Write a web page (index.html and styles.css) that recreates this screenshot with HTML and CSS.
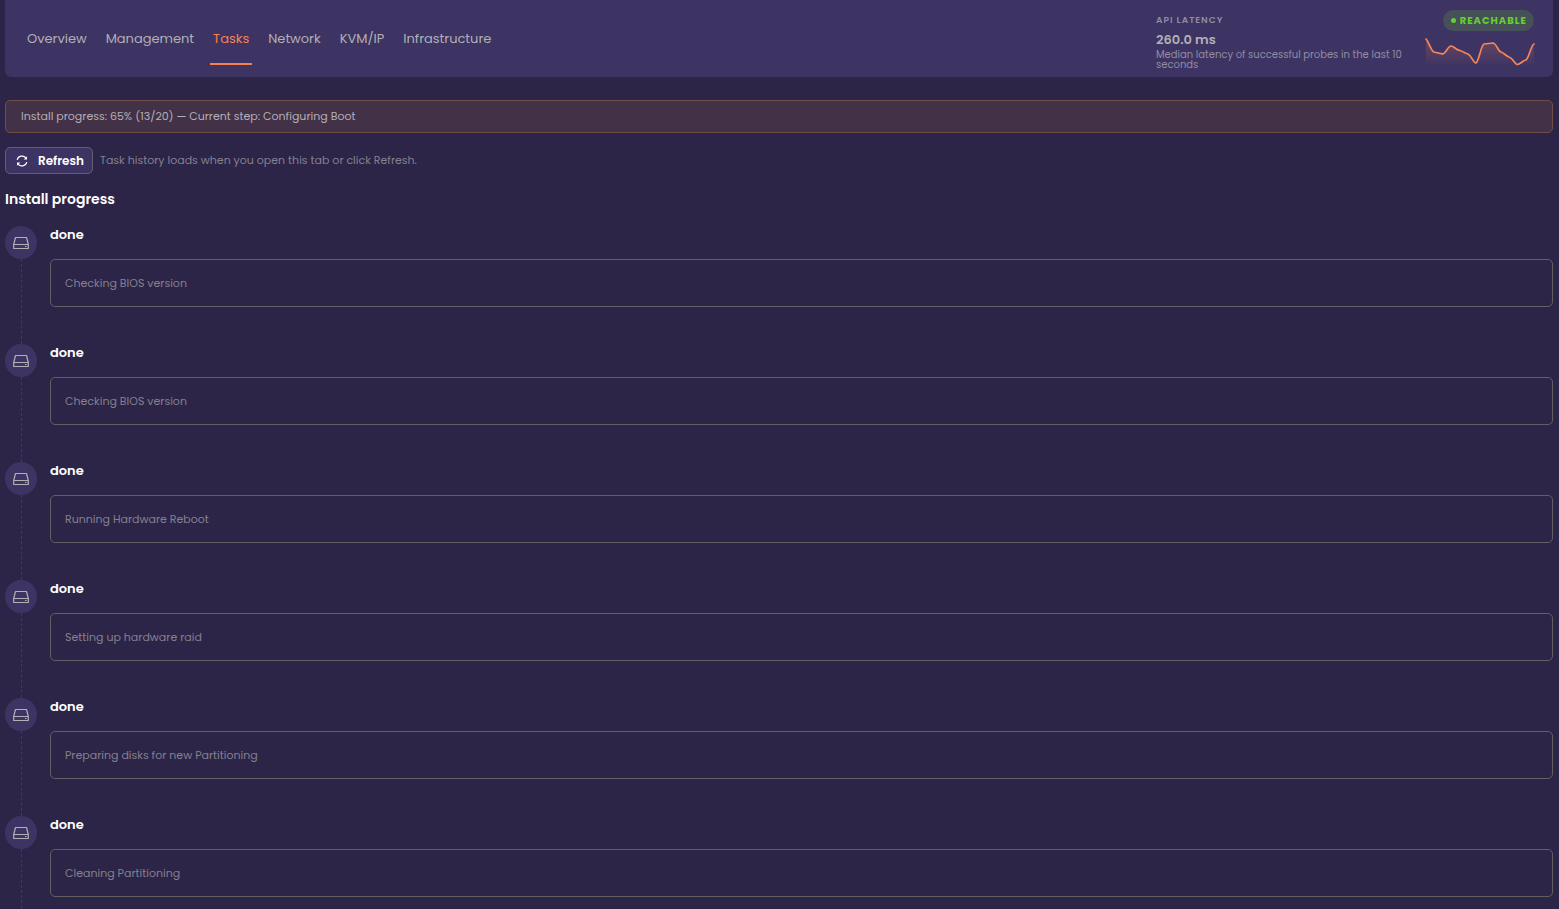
FILE: index.html
```html
<!DOCTYPE html>
<html lang="en">
<head>
<meta charset="utf-8">
<title>Server tasks</title>
<link rel="stylesheet" href="styles.css">
</head>
<body>
<svg class="defs" aria-hidden="true">
  <symbol id="drive" viewBox="0 0 16 14">
    <path d="M2.500 1.500h11l1.800 7v4H.7v-4zM.7 8.500h14.600M12 10.500h1.500" fill="none" stroke="currentColor" stroke-width="1.200" stroke-linejoin="round"/>
  </symbol>
</svg>
<header class="topbar">
  <nav class="tabs">
    <a class="tab" href="#overview">Overview</a>
    <a class="tab" href="#management">Management</a>
    <a class="tab tab-active" href="#tasks" aria-current="page">Tasks</a>
    <a class="tab" href="#network">Network</a>
    <a class="tab" href="#kvm">KVM/IP</a>
    <a class="tab" href="#infrastructure">Infrastructure</a>
  </nav>
  <section class="latency">
    <div class="latency-text">
      <div class="latency-label">API LATENCY</div>
      <div class="latency-value">260.0 ms</div>
      <div class="latency-note">Median latency of successful probes in the last 10 seconds</div>
    </div>
    <div class="latency-side">
      <span class="badge"><span class="dot"></span>REACHABLE</span>
      <svg class="spark" viewBox="0 0 108 28" aria-hidden="true">
        <defs>
          <linearGradient id="fade" x1="0" y1="0" x2="0" y2="1">
            <stop offset="0" stop-color="#f9814f" stop-opacity=".25"/>
            <stop offset="1" stop-color="#f9814f" stop-opacity="0"/>
          </linearGradient>
        </defs>
        <path fill="url(#fade)" d="M0 1C3 4 5 13 8 14L17 16C20 15 22 8 25 8C28 8 30 12 34 12.500C38 14 39 15 42 16C46 18 47 25 50 25C53 23 55 7 58 6L67 5C70 5 72 13 75 14C78 15 80 18 83 19C87 20 88 25 91 26.500C94 27 97 22 100 22C103 20 105 7 108 6V28H0z"/>
        <path fill="none" stroke="#f5855a" stroke-width="1.700" stroke-linecap="round" d="M0 1C3 4 5 13 8 14L17 16C20 15 22 8 25 8C28 8 30 12 34 12.500C38 14 39 15 42 16C46 18 47 25 50 25C53 23 55 7 58 6L67 5C70 5 72 13 75 14C78 15 80 18 83 19C87 20 88 25 91 26.500C94 27 97 22 100 22C103 20 105 7 108 6"/>
      </svg>
    </div>
  </section>
</header>
<main>
  <div class="notice" role="status">Install progress: 65% (13/20) — Current step: Configuring Boot</div>
  <div class="toolbar">
    <button class="refresh" type="button">
      <svg class="refresh-icon" viewBox="0 0 12 12" aria-hidden="true">
        <path d="M1.200 4.800A5 5 0 0 1 10 3M10.800 7.200A5 5 0 0 1 2 9" fill="none" stroke="currentColor" stroke-width="1.200"/>
        <path d="M11 1.200V4.500H7.700zM1 10.800V7.500H4.300z" fill="currentColor"/>
      </svg>
      Refresh
    </button>
    <span class="hint">Task history loads when you open this tab or click Refresh.</span>
  </div>
  <h2 class="title">Install progress</h2>
  <ol class="timeline">
    <li class="step"><div class="rail"><span class="node"><svg class="drive"><use href="#drive"/></svg></span></div><div class="body"><h3 class="state">done</h3><p class="card">Checking BIOS version</p></div></li>
    <li class="step"><div class="rail"><span class="node"><svg class="drive"><use href="#drive"/></svg></span></div><div class="body"><h3 class="state">done</h3><p class="card">Checking BIOS version</p></div></li>
    <li class="step"><div class="rail"><span class="node"><svg class="drive"><use href="#drive"/></svg></span></div><div class="body"><h3 class="state">done</h3><p class="card">Running Hardware Reboot</p></div></li>
    <li class="step"><div class="rail"><span class="node"><svg class="drive"><use href="#drive"/></svg></span></div><div class="body"><h3 class="state">done</h3><p class="card">Setting up hardware raid</p></div></li>
    <li class="step"><div class="rail"><span class="node"><svg class="drive"><use href="#drive"/></svg></span></div><div class="body"><h3 class="state">done</h3><p class="card">Preparing disks for new Partitioning</p></div></li>
    <li class="step"><div class="rail"><span class="node"><svg class="drive"><use href="#drive"/></svg></span></div><div class="body"><h3 class="state">done</h3><p class="card">Cleaning Partitioning</p></div></li>
  </ol>
</main>
</body>
</html>
```
FILE: styles.css
```css
* { box-sizing: border-box; }
body {
  margin: 0;
  padding: 0 6px 0 5px;
  background: #2c2548;
  color: #b2afb6;
  font-family: Poppins, Inter, "Open Sans", sans-serif;
  font-size: 11px;
  line-height: 16px;
}
h2, h3, p, ol { margin: 0; padding: 0; }
.defs { display: none; }
.topbar {
  display: flex;
  justify-content: space-between;
  align-items: flex-start;
  padding: 10px 19px 7px;
  background: #3d3464;
  border-radius: 0 0 6px 6px;
}
.tabs { display: flex; gap: 13px; padding-top: 15px; }
.tab {
  padding: 4px 3px 14px;
  border-bottom: 2px solid transparent;
  color: #b2afb6;
  font-size: 13px;
  line-height: 20px;
  text-decoration: none;
}
.tab-active { color: #f9814f; border-color: #f9814f; }
.latency { display: flex; gap: 20px; }
.latency-text { width: 250px; padding-top: 4px; }
.latency-label {
  color: #918ca2;
  font-size: 9px;
  font-weight: 600;
  line-height: 12px;
  letter-spacing: 1px;
}
.latency-value { padding: 6px 0 2px; font-size: 13px; font-weight: 600; line-height: 16px; }
.latency-note { color: #918ca2; font-size: 10px; line-height: 10px; }
.latency-side { display: flex; flex-direction: column; align-items: flex-end; gap: 7px; }
.badge {
  display: flex;
  align-items: center;
  gap: 4px;
  padding: 0 7px 0 8px;
  border-radius: 11px;
  background: #455058;
  color: #66cf2e;
  font-size: 10px;
  font-weight: 700;
  line-height: 21px;
  letter-spacing: 1px;
}
.dot { width: 5px; height: 5px; border-radius: 50%; background: currentColor; }
.spark { display: block; width: 108px; height: 28px; overflow: visible; }
.notice {
  margin-top: 23px;
  padding: 7px 15px 8px;
  border: 1px solid #704e45;
  border-radius: 5px;
  background: #433247;
}
.toolbar { display: flex; align-items: center; gap: 7px; margin-top: 14px; }
.refresh {
  display: flex;
  align-items: center;
  gap: 10px;
  padding: 0 8px 0 10px;
  border: 1px solid #635f70;
  border-radius: 5px;
  background: #3d3464;
  color: #fff;
  font: inherit;
  font-size: 12px;
  font-weight: 600;
  line-height: 25px;
}
.refresh-icon { width: 12px; height: 12px; }
.hint { padding-bottom: 1px; color: #85808f; }
.title { margin-top: 15px; color: #fff; font-size: 14px; font-weight: 600; line-height: 20px; }
.timeline { margin-top: 17px; list-style: none; }
.step { display: flex; gap: 13px; }
.rail { display: flex; flex-direction: column; align-items: center; width: 32px; }
.rail::after { content: ""; flex: 1; border-left: 1px dashed #403958; }
.node {
  display: flex;
  align-items: center;
  justify-content: center;
  width: 32px;
  height: 33px;
  border-radius: 50%;
  background: #3d3464;
}
.drive { width: 16px; height: 14px; }
.body { flex: 1; padding-bottom: 37px; }
.state { color: #fff; font-size: 13px; font-weight: 600; line-height: 18px; }
.card {
  margin-top: 15px;
  padding: 15px 14px;
  border: 1px solid #625f62;
  border-radius: 5px;
  color: #85808f;
}
```
